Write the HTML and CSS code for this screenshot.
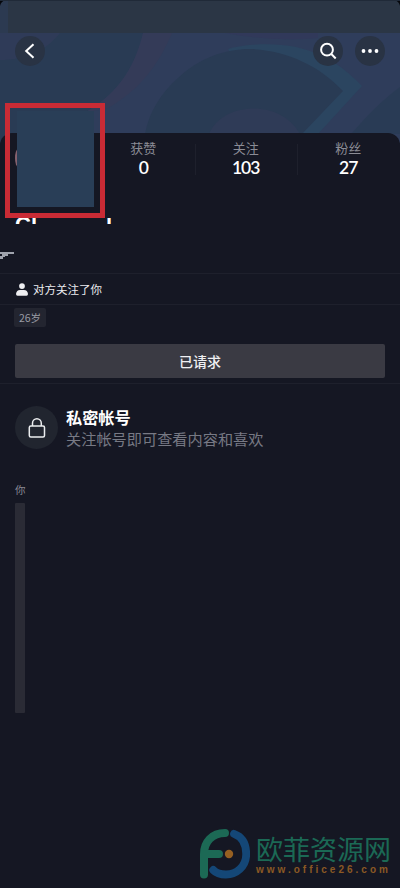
FILE: index.html
```html
<!DOCTYPE html>
<html lang="zh-CN">
<head>
<meta charset="utf-8">
<title>私密帐号</title>
<link rel="stylesheet" href="styles.css">
</head>
<body>
<main class="screen">
  <header class="cover">
    <svg class="cover-art" viewBox="0 0 400 150" aria-hidden="true">
      <rect width="400" height="150" fill="#293b54"/>
      <path d="M0 33H60C45 52 24 60 0 60Z" fill="#2f3b58"/>
      <path d="M143 33H400V150H70L84 113C122 92 136 62 143 33Z" fill="#2f3d5b"/>
      <path d="M143 33H172C160 61 143 88 108 108L84 113C122 92 136 62 143 33Z" fill="#343b58"/>
      <path d="M228 49C250 43 275 43 296 47C324 53 345 68 362 86L318 134H290Z" fill="#2b4560"/>
      <path d="M145 134C149 112 161 93 178 78C199 58 225 49 250 49C286 50 320 66 343 91L302 134Z" fill="#293b54"/>
      <path d="M209 134C222 102 280 98 300 134Z" fill="#2f3b57"/>
      <path d="M400 87C382 100 366 117 351 134H400Z" fill="#293b55"/>
      <path d="M225 33H318V38C285 41 250 38 225 33Z" fill="#31395a"/>
      <rect width="400" height="33" fill="#2b3645"/>
      <path d="M0 0H8V33H0Z" fill="#2c3a51"/>
      <path d="M0 0H6Q1 1 0 6ZM400 0H394Q399 1 400 6Z" fill="#05070c"/>
      <path d="M0 0H400V1H0Z" fill="#202a38"/>
    </svg>
    <nav class="topbar">
      <button class="round" aria-label="返回"><svg viewBox="0 0 30 30"><path d="M18.5 8.2 11.2 15l7.3 6.8" fill="none" stroke="#fff" stroke-width="2"/></svg></button>
      <span class="grow"></span>
      <button class="round" aria-label="搜索"><svg viewBox="0 0 30 30"><circle cx="14" cy="13.7" r="5.9" fill="none" stroke="#fff" stroke-width="2"/><path d="m18.1 17.8 4.6 4.7" stroke="#fff" stroke-width="2"/></svg></button>
      <button class="round" aria-label="更多"><svg viewBox="0 0 30 30" fill="#fff"><circle cx="8.5" cy="15" r="1.9"/><circle cx="15" cy="15" r="1.9"/><circle cx="21.5" cy="15" r="1.9"/></svg></button>
    </nav>
  </header>
  <section class="panel">
    <div class="mark"><div class="avatar"></div></div>
    <div class="stats">
      <div class="stat"><span>获赞</span><b>0</b></div>
      <div class="stat"><span>关注</span><b>103</b></div>
      <div class="stat"><span>粉丝</span><b>27</b></div>
    </div>
    <div class="name"><span>Cl</span><span>l</span></div>
    <svg class="scrap" viewBox="0 0 16 8" aria-hidden="true"><path d="M0 0H14V2H8V4H5V5H3V7H0V4H2V2H0Z" fill="#9fa3ad"/></svg>
    <div class="follow">
      <svg viewBox="0 0 12 13" fill="#eeeef1"><circle cx="6" cy="3.1" r="2.9"/><path d="M0 11Q.5 7 4 7H8Q11.5 7 12 11Q12 12.8 10.5 12.8H1.5Q0 12.8 0 11Z"/></svg>
      <span>对方关注了你</span>
    </div>
    <div class="age">26岁</div>
    <button class="request">已请求</button>
    <div class="private">
      <div class="lock"><svg viewBox="0 0 18 20" fill="none" stroke="#eceef0" stroke-width="1.5"><rect x="1.3" y="8" width="15.2" height="11" rx="1.5"/><path d="M4.5 8V5.2a4.4 4.4 0 0 1 8.8 0V8"/></svg></div>
      <div class="copy"><strong>私密帐号</strong><p>关注帐号即可查看内容和喜欢</p></div>
    </div>
    <div class="you">你</div>
    <div class="card"></div>
    <footer class="brand">
      <svg viewBox="0 0 50 50" fill="none" stroke-linecap="round">
        <path d="M34 4.8C43 8 46.2 16 46.2 25C46.2 38 36 45.5 26 45.5C20 45.5 16 44 13.2 41" stroke="#144777" stroke-width="7.8"/>
        <path d="M25 4C12 4 4 13 4 25V45.5M4 25H19" stroke="#1c6955" stroke-width="8"/>
        <circle cx="29" cy="25" r="4.2" fill="#966022"/>
      </svg>
      <div class="brand-copy"><div class="brand-name">欧菲资源网</div><div class="brand-url">www.office26.com</div></div>
    </footer>
  </section>
</main>
</body>
</html>
```
FILE: styles.css
```css
* { box-sizing: border-box; }
body { margin: 0; background: #151723; color: #fff; font-family: "Noto Sans", "Noto Sans CJK SC", sans-serif; }
button { border: 0; padding: 0; font: inherit; color: inherit; }
svg { display: block; }
.screen { width: 400px; height: 888px; overflow: hidden; }
.cover { position: relative; height: 133px; }
.cover-art { position: absolute; inset: 0; width: 400px; height: 150px; }
.topbar { position: relative; display: flex; gap: 12px; padding: 36px 15px 0; }
.grow { flex: 1; }
.round { width: 30px; height: 30px; border-radius: 50%; background: #293344; }
.round svg { width: 30px; height: 30px; }
.panel { position: relative; height: 755px; background: #151723; border-radius: 12px 12px 0 0; padding-top: 5px; }
.mark { position: absolute; left: 5px; top: -30px; width: 100px; height: 115px; border: 5px solid #c92b35; z-index: 1; }
.mark::before { content: ""; position: absolute; left: 5px; top: 41px; width: 6px; height: 18px; border-radius: 50%; background: #85616e; }
.avatar { position: absolute; left: 7px; top: 3px; width: 77px; height: 96px; background: #293e57; }
.stats { display: flex; height: 80px; margin-left: 92px; width: 307.5px; }
.stat { flex: 1; position: relative; text-align: center; }
.stat + .stat::before { content: ""; position: absolute; left: 0; top: 6px; width: 1px; height: 31px; background: #1e202c; }
.stat span { display: block; font: 13px/20px "Noto Sans CJK SC", sans-serif; color: #8b8c95; }
.stat b { display: block; font: 600 17.5px/20px Lato, "Noto Sans", sans-serif; letter-spacing: -.9px; }
.name { display: flex; justify-content: space-between; width: 97px; margin-left: 15px; height: 6px; overflow: hidden; font: 700 22px/22px "Liberation Sans", sans-serif; }
.name span { margin-top: -4px; }
.scrap { width: 16px; height: 8px; margin-top: 28px; }
.follow { display: flex; align-items: center; height: 32px; margin-top: 13px; padding-left: 16px; border-top: 1px solid #1e202c; border-bottom: 1px solid #1e202c; gap: 5px; font: 11.5px/30px "Noto Sans CJK SC", sans-serif; color: #ececf0; }
.follow svg { width: 12px; height: 13px; }
.age { width: 32px; height: 19px; margin: 3px 0 0 14px; border-radius: 2px; background: #232530; color: #999ba4; text-align: center; font: 10.5px/19px "Noto Sans CJK SC", sans-serif; }
.request { display: block; width: 370px; height: 34px; margin: 17px 0 0 15px; border-radius: 2px; background: #3a3a43; font: 500 14px/34px "Noto Sans CJK SC", sans-serif; color: #efeff2; }
.private { display: flex; gap: 8px; height: 92px; margin-top: 5px; padding: 22px 0 0 15px; border-top: 1px solid #1e202c; }
.lock { display: grid; place-items: center; width: 43px; height: 43px; border-radius: 50%; background: #21252f; }
.lock svg { width: 18px; height: 20px; }
.copy { padding-top: 1px; }
.copy strong { display: block; font: 700 16.2px/21px "Noto Sans CJK SC", sans-serif; }
.copy p { margin: 0; font: 15.2px/21px "Noto Sans CJK SC", sans-serif; color: #777984; }
.you { height: 16px; margin: 7px 0 0 15px; font: 10.5px/16px "Noto Sans CJK SC", sans-serif; color: #898a95; }
.card { width: 10px; height: 210px; margin: 5px 0 0 15px; border-radius: 1px; background: #2a2b35; }
.brand { display: flex; gap: 6px; margin: 116px 0 0 200px; }
.brand svg { width: 50px; height: 50px; }
.brand-name { margin-top: 5px; font: 27px/30px "Noto Sans CJK SC", sans-serif; color: #1b6955; white-space: nowrap; }
.brand-url { font: 700 10px/12px "Liberation Sans", sans-serif; letter-spacing: 3px; color: #8b5923; white-space: nowrap; }
```
